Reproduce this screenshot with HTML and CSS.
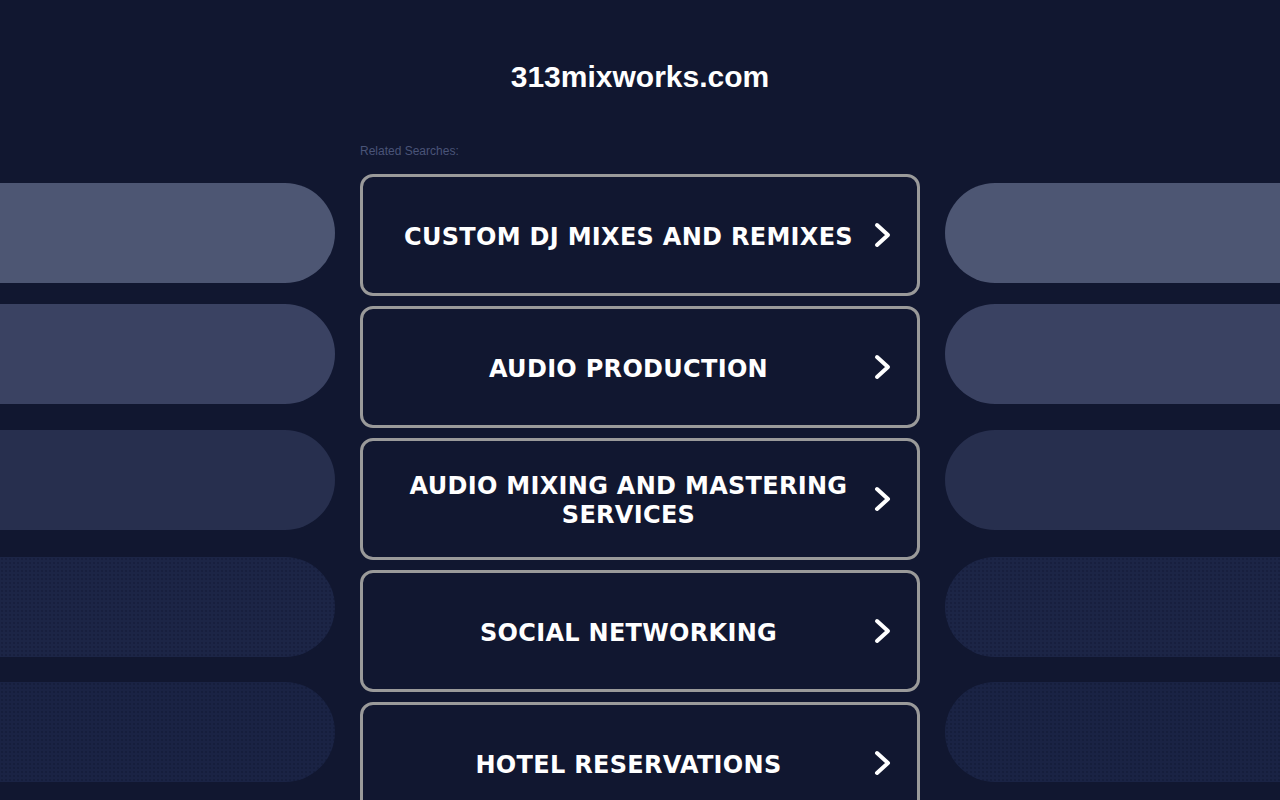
FILE: index.html
```html
<!DOCTYPE html>
<html>
<head>
<meta charset="utf-8">
<title>313mixworks.com</title>
<link rel="stylesheet" href="styles.css">
</head>
<body>
<header class="header">
  <h1 class="domain">313mixworks.com</h1>
</header>
<main class="layout">
  <aside class="side side-left">
    <div class="pill pill-1"></div>
    <div class="pill pill-2"></div>
    <div class="pill pill-3"></div>
    <div class="pill pill-4 dotted"></div>
    <div class="pill pill-5 dotted"></div>
  </aside>
  <section class="center">
    <div class="related">Related Searches:</div>
    <div class="links">
      <a class="link" href="#"><span class="label">CUSTOM DJ MIXES AND REMIXES</span><svg class="chev" viewBox="0 0 18 26" width="18" height="26"><path d="M3 3 L14 13 L3 23" fill="none" stroke="#fff" stroke-width="4" stroke-linecap="round" stroke-linejoin="round"/></svg></a>
      <a class="link" href="#"><span class="label">AUDIO PRODUCTION</span><svg class="chev" viewBox="0 0 18 26" width="18" height="26"><path d="M3 3 L14 13 L3 23" fill="none" stroke="#fff" stroke-width="4" stroke-linecap="round" stroke-linejoin="round"/></svg></a>
      <a class="link" href="#"><span class="label">AUDIO MIXING AND MASTERING SERVICES</span><svg class="chev" viewBox="0 0 18 26" width="18" height="26"><path d="M3 3 L14 13 L3 23" fill="none" stroke="#fff" stroke-width="4" stroke-linecap="round" stroke-linejoin="round"/></svg></a>
      <a class="link" href="#"><span class="label">SOCIAL NETWORKING</span><svg class="chev" viewBox="0 0 18 26" width="18" height="26"><path d="M3 3 L14 13 L3 23" fill="none" stroke="#fff" stroke-width="4" stroke-linecap="round" stroke-linejoin="round"/></svg></a>
      <a class="link" href="#"><span class="label">HOTEL RESERVATIONS</span><svg class="chev" viewBox="0 0 18 26" width="18" height="26"><path d="M3 3 L14 13 L3 23" fill="none" stroke="#fff" stroke-width="4" stroke-linecap="round" stroke-linejoin="round"/></svg></a>
    </div>
  </section>
  <aside class="side side-right">
    <div class="pill pill-1"></div>
    <div class="pill pill-2"></div>
    <div class="pill pill-3"></div>
    <div class="pill pill-4 dotted"></div>
    <div class="pill pill-5 dotted"></div>
  </aside>
</main>
</body>
</html>
```
FILE: styles.css
```css
html, body {
  margin: 0;
  padding: 0;
  background: #111730;
  height: 100%;
  overflow: hidden;
}
body {
  font-family: "Liberation Sans", Arial, sans-serif;
  color: #fff;
}
.header {
  padding-top: 60px;
  height: 83px;
  box-sizing: content-box;
  text-align: center;
}
.domain {
  margin: 0;
  font-family: "Liberation Sans", Arial, sans-serif;
  font-weight: bold;
  font-size: 30px;
  line-height: 34px;
  color: #fff;
}
.layout {
  display: grid;
  grid-template-columns: 335px 560px 335px;
  column-gap: 25px;
}
.side {
  display: flex;
  flex-direction: column;
  padding-top: 40px;
}
.pill {
  flex: none;
  height: 100px;
  background: #4d5673;
}
.side-left .pill {
  border-radius: 0 50px 50px 0;
}
.side-right .pill {
  border-radius: 50px 0 0 50px;
}
.pill-1 { background-color: #4d5673; }
.pill-2 { background-color: #3a4262; margin-top: 21px; }
.pill-3 { background-color: #272f4e; margin-top: 26px; }
.pill-4 { background-color: #1c2546; margin-top: 27px; }
.pill-5 { background-color: #1a2344; margin-top: 25px; }
.dotted {
  background-image: radial-gradient(rgba(10, 16, 40, 0.4) 0.6px, transparent 0.9px);
  background-size: 4px 4px;
}
.related {
  font-size: 12px;
  line-height: 14px;
  color: #4a5478;
  padding-top: 1px;
  height: 30px;
}
.links {
  display: flex;
  flex-direction: column;
  gap: 10px;
}
.link {
  display: flex;
  align-items: center;
  height: 122px;
  box-sizing: border-box;
  border: 3px solid #9a9a9a;
  border-radius: 13px;
  padding: 0 25px 0 20px;
  text-decoration: none;
  color: #fff;
}
.label {
  flex: 1;
  text-align: center;
  font-family: "DejaVu Sans", Verdana, sans-serif;
  font-weight: bold;
  font-size: 24px;
  letter-spacing: 0.3px;
  line-height: 29px;
  padding: 4px 16px 0 16px;
}
.chev {
  flex: none;
  display: block;
}
```
